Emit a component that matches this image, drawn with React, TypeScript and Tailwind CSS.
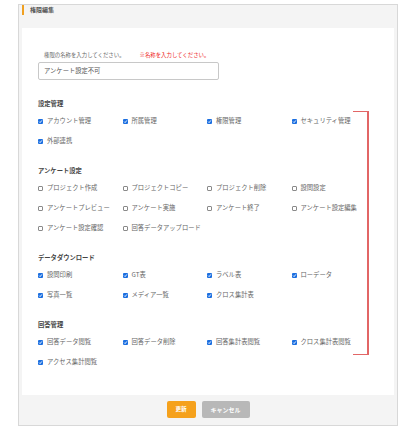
import React from "react";

type Item = { label: string; checked: boolean };
type Section = { title: string; items: Item[] };

const sections: Section[] = [
  {
    title: "設定管理",
    items: [
      { label: "アカウント管理", checked: true },
      { label: "所属管理", checked: true },
      { label: "権限管理", checked: true },
      { label: "セキュリティ管理", checked: true },
      { label: "外部連携", checked: true },
    ],
  },
  {
    title: "アンケート設定",
    items: [
      { label: "プロジェクト作成", checked: false },
      { label: "プロジェクトコピー", checked: false },
      { label: "プロジェクト削除", checked: false },
      { label: "設問設定", checked: false },
      { label: "アンケートプレビュー", checked: false },
      { label: "アンケート実施", checked: false },
      { label: "アンケート終了", checked: false },
      { label: "アンケート設定編集", checked: false },
      { label: "アンケート設定確認", checked: false },
      { label: "回答データアップロード", checked: false },
    ],
  },
  {
    title: "データダウンロード",
    items: [
      { label: "設問印刷", checked: true },
      { label: "GT表", checked: true },
      { label: "ラベル表", checked: true },
      { label: "ローデータ", checked: true },
      { label: "写真一覧", checked: true },
      { label: "メディア一覧", checked: true },
      { label: "クロス集計表", checked: true },
    ],
  },
  {
    title: "回答管理",
    items: [
      { label: "回答データ閲覧", checked: true },
      { label: "回答データ削除", checked: true },
      { label: "回答集計表閲覧", checked: true },
      { label: "クロス集計表閲覧", checked: true },
      { label: "アクセス集計閲覧", checked: true },
    ],
  },
];

const Check = ({ checked }: { checked: boolean }) =>
  checked ? (
    <span className="flex h-[5px] w-[5px] shrink-0 items-center justify-center rounded-[1px] bg-[#1c6fe0]">
      <svg viewBox="0 0 10 10" className="h-[5px] w-[5px]">
        <path d="M2.2 5.2 L4.2 7.2 L7.8 2.8" fill="none" stroke="#fff" strokeWidth="1.8" />
      </svg>
    </span>
  ) : (
    <span className="h-[5px] w-[5px] shrink-0 rounded-[1px] border-[0.8px] border-[#8a8a8a] bg-white" />
  );

const App = () => {
  return (
    <div className="h-[441px] w-[410px] bg-white pl-[18px] pt-[4px] font-['Noto_Sans_CJK_JP',sans-serif]">
      <div className="flex h-[422px] w-[380px] flex-col border border-[#d8d8d8] bg-[#f4f4f4]">
        {/* header */}
        <div className="flex h-[23px] items-start pl-[3px]">
          <span className="h-[10px] w-[2px] bg-[#f0a020]" />
          <span className="ml-[6px] mt-[1px] text-[6px] font-bold leading-[8px] text-[#555]">
            権限編集
          </span>
        </div>

        {/* body */}
        <div className="relative mx-[3px] h-[367px] bg-white pl-[16px] pt-[22px]">
          <div className="flex h-[10px] items-center pl-[6px] text-[5.4px] leading-[10px]">
            <span className="text-[#666]">権限の名称を入力してください。</span>
            <span className="ml-[15px] text-[#ee2222]">※名称を入力してください。</span>
          </div>
          <div className="mt-[2px] flex h-[18px] w-[181px] items-center rounded-[2px] border border-[#c8c8c8] pl-[5px] text-[6.3px] text-[#555]">
            アンケート設定不可
          </div>

          <div className="mt-[17px] flex flex-col gap-[13px]">
            {sections.map((s) => (
              <div key={s.title}>
                <div className="flex h-[14px] items-center text-[6.3px] font-bold text-[#444]">
                  {s.title}
                </div>
                <div className="grid w-[338px] grid-cols-4">
                  {s.items.map((it) => (
                    <div
                      key={it.label}
                      className="flex h-[20px] items-center gap-[4px] text-[6.3px] text-[#666]"
                    >
                      <Check checked={it.checked} />
                      <span className="whitespace-nowrap">{it.label}</span>
                    </div>
                  ))}
                </div>
              </div>
            ))}
          </div>

          {/* red annotation bracket */}
          <div className="absolute left-[331px] top-[83px] h-[244px] w-[16px] border-y-[1.5px] border-r-[2px] border-[#e26666]" />
        </div>

        {/* footer */}
        <div className="flex flex-1 items-center justify-center gap-[6px] pb-[2px]">
          <button className="h-[17px] w-[29px] rounded-[2px] bg-[#f5a11c] text-[5.6px] font-bold text-white">
            更新
          </button>
          <button className="h-[17px] w-[48px] rounded-[2px] bg-[#b8b8b8] text-[6px] font-bold text-white">
            キャンセル
          </button>
        </div>
      </div>
    </div>
  );
};

export default App;
